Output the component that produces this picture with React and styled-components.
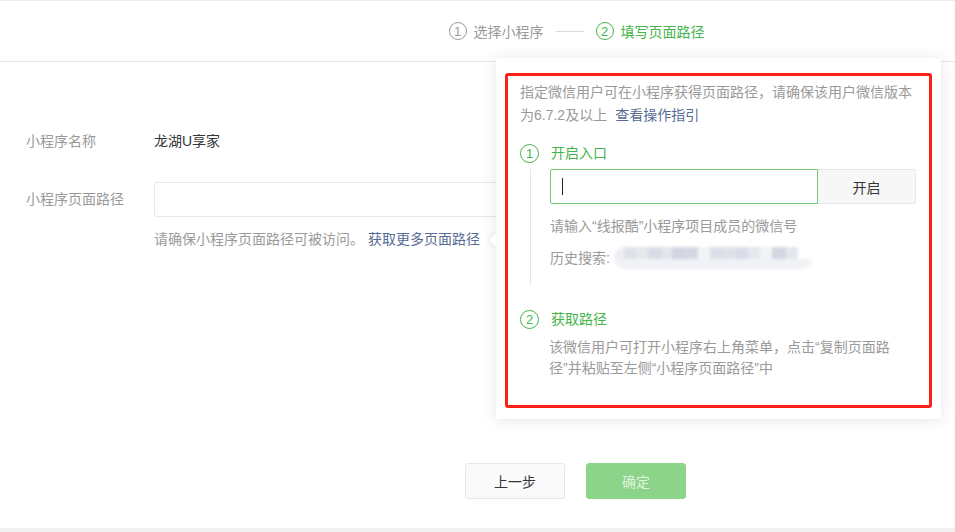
import * as React from 'react'
import styled, { createGlobalStyle } from 'styled-components'

const GlobalStyle = createGlobalStyle`
  html, body {
    margin: 0;
    padding: 0;
    background: #f0f0f0;
  }
  body {
    font-family: "Liberation Sans", "Noto Sans CJK SC", sans-serif;
    font-size: 14px;
    color: #353535;
  }
  * { box-sizing: border-box; }
`

const green = '#44b549'
const gray = '#9a9a9a'
const link = '#576b95'

const Page = styled.div`
  position: relative;
  height: 528px;
  background: #fff;
  border-top: 1px solid #ededed;
`

const Header = styled.div`
  height: 61px;
  border-bottom: 1px solid #e7e7e7;
  display: flex;
  align-items: center;
  justify-content: center;
  padding-left: 198px;
`

const Step = styled.div`
  display: flex;
  align-items: center;
  gap: 7px;
  color: ${props => (props.active ? green : gray)};
`

const Num = styled.span`
  width: ${props => props.size || 18}px;
  height: ${props => props.size || 18}px;
  border-radius: 50%;
  border: 1px solid currentColor;
  display: inline-flex;
  align-items: center;
  justify-content: center;
  font-size: 13px;
  line-height: 1;
  flex: none;
`

const StepLine = styled.span`
  width: 28px;
  height: 1px;
  background: #d9dadc;
  margin: 0 12px;
`

const Form = styled.div`
  padding: 61px 0 0 26px;
  display: flex;
  flex-direction: column;
  gap: 23px;
`

const Row = styled.div`
  display: flex;
  align-items: ${props => (props.top ? 'flex-start' : 'center')};
`

const Label = styled.div`
  width: 128px;
  color: ${gray};
  line-height: ${props => props.lh || 36}px;
`

const Value = styled.div`
  line-height: 36px;
  color: #353535;
`

const Field = styled.div`
  display: flex;
  flex-direction: column;
`

const TextInput = styled.div`
  width: 420px;
  height: 35px;
  border: 1px solid #e4e8eb;
  border-radius: 3px;
  background: #fff;
`

const Hint = styled.div`
  margin-top: ${props => props.mt || 0}px;
  color: ${gray};
  line-height: 20px;
`

const Link = styled.a`
  color: ${link};
  text-decoration: none;
  margin-left: ${props => props.ml || 0}px;
  cursor: pointer;
`

const Footer = styled.div`
  position: absolute;
  left: 0;
  right: 0;
  top: 462px;
  display: flex;
  justify-content: center;
  gap: 21px;
  padding-left: 196px;
`

const Button = styled.button`
  width: 100px;
  height: 36px;
  border-radius: 3px;
  font-family: inherit;
  font-size: 14px;
  border: 1px solid ${props => (props.primary ? '#8cd48a' : '#e4e8eb')};
  background: ${props => (props.primary ? '#8cd48a' : '#fafafa')};
  color: ${props => (props.primary ? '#dff3de' : '#353535')};
`

const Popover = styled.div`
  position: absolute;
  left: 496px;
  top: 57px;
  width: 445px;
  height: 361px;
  background: #fff;
  box-shadow: 0 1px 14px rgba(40, 50, 80, 0.12);
  padding: 15px 9px 11px 9px;

  &::before {
    content: '';
    position: absolute;
    left: -5px;
    top: 177px;
    width: 10px;
    height: 10px;
    background: #fff;
    transform: rotate(45deg);
    box-shadow: -2px 2px 4px rgba(40, 50, 80, 0.06);
  }
`

const Highlight = styled.div`
  position: relative;
  height: 100%;
  border: 3px solid #fb2116;
  border-radius: 3px;
  padding: 5px 12px 0 12px;
`

const Intro = styled.div`
  color: ${gray};
  line-height: 23px;
`

const GuideStep = styled.div`
  margin-top: ${props => props.mt || 0}px;
`

const GuideTitle = styled.div`
  display: flex;
  align-items: center;
  gap: 12px;
  color: ${green};
  line-height: 20px;
`

const GuideBody = styled.div`
  margin: 6px 0 0 10px;
  padding-left: 19px;
  border-left: ${props => (props.line ? '1px solid #e5e5e5' : 'none')};
  padding-bottom: ${props => props.pb || 0}px;
`

const InputGroup = styled.div`
  display: flex;
  height: 35px;
`

const GreenInput = styled.div`
  width: 268px;
  border: 1px solid #74c774;
  border-radius: 2px 0 0 2px;
  display: flex;
  align-items: center;
  padding-left: 11px;

  &::after {
    content: '';
    width: 1px;
    height: 17px;
    background: #222;
  }
`

const SideButton = styled.div`
  width: 98px;
  border: 1px solid #e4e8eb;
  border-left: none;
  background: #f7f7f7;
  border-radius: 0 2px 2px 0;
  display: flex;
  align-items: center;
  justify-content: center;
  color: #353535;
`

const History = styled.div`
  display: flex;
  align-items: center;
  margin-top: 11px;
  color: ${gray};
  line-height: 20px;
`

const Blurred = styled.div`
  display: flex;
  margin-left: 4px;
  height: 22px;
  filter: blur(1.8px);
  border-radius: 11px;
  overflow: hidden;
`

const Blot = styled.span`
  display: block;
  width: ${props => props.w}px;
  background: linear-gradient(${props => props.c} 0 55%, #f1f2f6 55% 100%);
`

const Desc = styled.div`
  margin: 8px 0 0 29px;
  color: ${gray};
  line-height: 21px;
`

const blots = [
  [10, '#eef0f4'], [12, '#dfe1ea'], [12, '#e6e8ee'], [14, '#d9dce6'], [10, '#e3e5ec'],
  [12, '#d2d5e0'], [14, '#d5d8e3'], [12, '#f2f3f6'], [14, '#dcdfe8'], [12, '#dfe2ea'],
  [12, '#d9dce6'], [12, '#e6e8ee'], [12, '#f2f3f6'], [14, '#d4d7e2'], [12, '#e5e7ee'],
  [14, '#ffffff']
]

export default function App() {
  return (
    <>
      <GlobalStyle />
      <Page>
        <Header>
          <Step>
            <Num>1</Num>
            <span>选择小程序</span>
          </Step>
          <StepLine />
          <Step active>
            <Num>2</Num>
            <span>填写页面路径</span>
          </Step>
        </Header>

        <Form>
          <Row>
            <Label>小程序名称</Label>
            <Value>龙湖U享家</Value>
          </Row>
          <Row top>
            <Label lh={35}>小程序页面路径</Label>
            <Field>
              <TextInput />
              <Hint mt={12}>
                请确保小程序页面路径可被访问。
                <Link ml={4}>获取更多页面路径</Link>
              </Hint>
            </Field>
          </Row>
        </Form>

        <Popover>
          <Highlight>
            <Intro>
              指定微信用户可在小程序获得页面路径，请确保该用户微信版本为6.7.2及以上
              <Link ml={8}>查看操作指引</Link>
            </Intro>

            <GuideStep mt={16}>
              <GuideTitle>
                <Num size={19}>1</Num>
                <span>开启入口</span>
              </GuideTitle>
              <GuideBody line pb={16}>
                <InputGroup>
                  <GreenInput />
                  <SideButton>开启</SideButton>
                </InputGroup>
                <Hint mt={12}>请输入“线报酷”小程序项目成员的微信号</Hint>
                <History>
                  历史搜索:
                  <Blurred>
                    {blots.map(([w, c], i) => (
                      <Blot key={i} w={w} c={c} />
                    ))}
                  </Blurred>
                </History>
              </GuideBody>
            </GuideStep>

            <GuideStep mt={24}>
              <GuideTitle>
                <Num size={19}>2</Num>
                <span>获取路径</span>
              </GuideTitle>
              <Desc>
                该微信用户可打开小程序右上角菜单，点击“复制页面路径”并粘贴至左侧“小程序页面路径”中
              </Desc>
            </GuideStep>
          </Highlight>
        </Popover>

        <Footer>
          <Button>上一步</Button>
          <Button primary>确定</Button>
        </Footer>
      </Page>
    </>
  )
}
